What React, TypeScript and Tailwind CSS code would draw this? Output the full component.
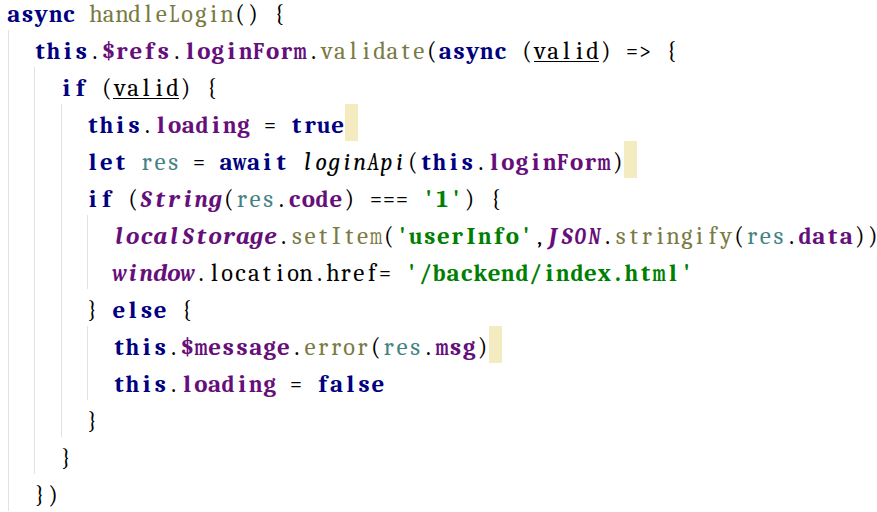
import React from "react";

type Tok = [string, string];
type Line = { indent: number; toks: Tok[]; box?: boolean };

const LINES: Line[] = [
  { indent: 0, toks: [["k", "async"], ["p", " "], ["f", "handleLogin"], ["p", "() {"]] },
  {
    indent: 2,
    toks: [
      ["k", "this"], ["p", "."], ["v", "$refs"], ["p", "."], ["v", "loginForm"], ["p", "."],
      ["f", "validate"], ["p", "("], ["k", "async"], ["p", " ("], ["u", "valid"], ["p", ") => {"],
    ],
  },
  { indent: 4, toks: [["k", "if"], ["p", " ("], ["u", "valid"], ["p", ") {"]] },
  { indent: 6, toks: [["k", "this"], ["p", "."], ["v", "loading"], ["p", " = "], ["k", "true"]], box: true },
  {
    indent: 6,
    toks: [
      ["k", "let"], ["p", " "], ["l", "res"], ["p", " = "], ["k", "await"], ["p", " "], ["i", "loginApi"],
      ["p", "("], ["k", "this"], ["p", "."], ["v", "loginForm"], ["p", ")"],
    ],
    box: true,
  },
  {
    indent: 6,
    toks: [
      ["k", "if"], ["p", " ("], ["g", "String"], ["p", "("], ["l", "res"], ["p", "."], ["v", "code"],
      ["p", ") === "], ["s", "'1'"], ["p", ") {"],
    ],
  },
  {
    indent: 8,
    toks: [
      ["g", "localStorage"], ["p", "."], ["f", "setItem"], ["p", "("], ["s", "'userInfo'"], ["p", ","],
      ["g", "JSON"], ["p", "."], ["f", "stringify"], ["p", "("], ["l", "res"], ["p", "."], ["v", "data"], ["p", "))"],
    ],
  },
  { indent: 8, toks: [["g", "window"], ["p", ".location.href= "], ["s", "'/backend/index.html'"]] },
  { indent: 6, toks: [["p", "} "], ["k", "else"], ["p", " {"]] },
  {
    indent: 8,
    toks: [
      ["k", "this"], ["p", "."], ["v", "$message"], ["p", "."], ["f", "error"], ["p", "("], ["l", "res"],
      ["p", "."], ["v", "msg"], ["p", ")"],
    ],
    box: true,
  },
  { indent: 8, toks: [["k", "this"], ["p", "."], ["v", "loading"], ["p", " = "], ["k", "false"]] },
  { indent: 6, toks: [["p", "}"]] },
  { indent: 4, toks: [["p", "}"]] },
  { indent: 2, toks: [["p", "})"]] },
];

const COLOR: Record<string, string> = {
  p: "text-[#000000]",
  k: "text-[#000080] font-bold",
  f: "text-[#7a7a43]",
  v: "text-[#660e7a] font-bold",
  l: "text-[#458383]",
  u: "text-[#000000]",
  s: "text-[#008000] font-bold",
  g: "text-[#660e7a] font-bold italic",
  i: "text-[#000000] italic",
};

const BOLD = new Set(["k", "v", "s", "g"]);
const ITALIC = new Set(["g", "i"]);

let ctx: CanvasRenderingContext2D | null = null;
function glyphWidth(ch: string, bold: boolean, italic: boolean): number {
  if (typeof document === "undefined") return 10;
  if (!ctx) ctx = document.createElement("canvas").getContext("2d");
  if (!ctx) return 10;
  ctx.font = `${italic ? "italic " : ""}${bold ? "bold " : ""}25px "Liberation Serif", serif`;
  return ctx.measureText(ch).width;
}

function Cell({ ch, t, guide }: { ch: string; t: string; guide?: boolean }) {
  const bold = BOLD.has(t);
  const italic = ITALIC.has(t);
  const cellW = bold ? 13.75 : 13.15;
  let scale = 1;
  if (ch !== " ") {
    const w = glyphWidth(ch, bold, italic);
    if (w > cellW - 1) scale = (cellW - 1) / w;
  }
  return (
    <span
      className={[
        "flex shrink-0 justify-center pt-[2px]",
        bold ? "w-[13.75px]" : "w-[13.15px]",
        t === "u" ? "bg-[linear-gradient(#000,#000)] bg-no-repeat bg-[length:100%_1px] bg-[position:0_31px]" : "",
        guide ? "bg-[linear-gradient(#e2e2e2,#e2e2e2)] bg-no-repeat bg-[length:1px_100%] bg-[position:1px_0]" : "",
      ].join(" ")}
    >
      <span
        className={"block whitespace-pre font-serif [font-family:Liberation_Serif,serif] " + COLOR[t]}
        style={scale < 1 ? { transform: `scaleX(${scale})` } : undefined}
      >
        {ch}
      </span>
    </span>
  );
}

function Row({ line }: { line: Line }) {
  const cells: React.ReactNode[] = [];
  for (let c = 0; c < line.indent; c++) {
    cells.push(<Cell key={"i" + c} ch=" " t="p" guide={c % 2 === 0} />);
  }
  line.toks.forEach(([t, text], ti) => {
    Array.from(text).forEach((ch, ci) => {
      cells.push(<Cell key={`t${ti}-${ci}`} ch={ch} t={t} />);
    });
  });
  if (line.box) cells.push(<span key="box" className="block h-full w-[13px] shrink-0 bg-[#f5ebc1]" />);
  return <div className="flex h-[37px] leading-[37px]">{cells}</div>;
}

export default function App() {
  return (
    <div className="h-[512px] w-[877px] overflow-hidden bg-white font-serif text-[25px]">
      <div className="-mt-[7px] flex flex-col bg-[linear-gradient(#e2e2e2,#e2e2e2)] bg-no-repeat bg-[length:1px_100%] bg-[position:8px_37px] pl-[7px]">
        {LINES.map((l, i) => (
          <Row key={i} line={l} />
        ))}
      </div>
    </div>
  );
}
